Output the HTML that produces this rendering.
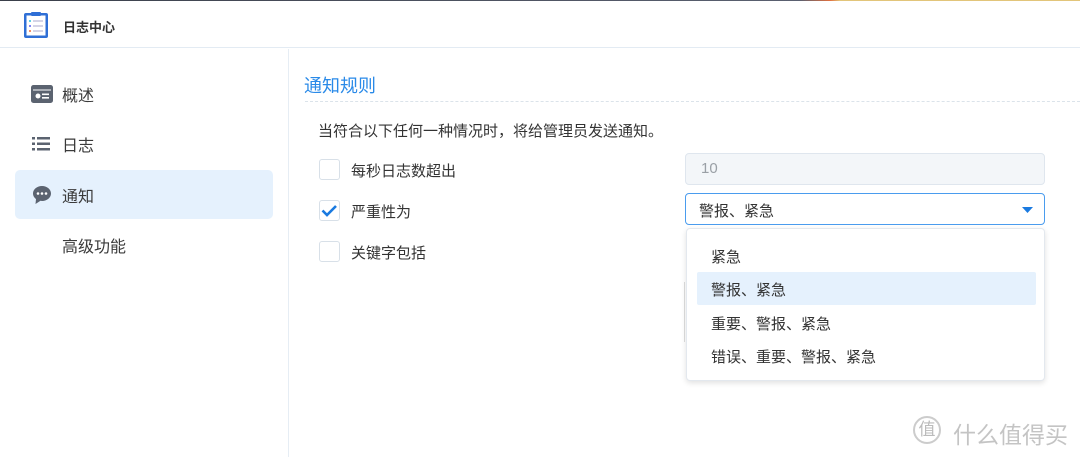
<!DOCTYPE html>
<html><head><meta charset="utf-8"><style>
*{margin:0;padding:0;box-sizing:border-box}
body{width:1080px;height:457px;overflow:hidden;background:#fff;font-family:"Liberation Sans","Noto Sans CJK SC",sans-serif;color:#333;position:relative}
.topline{position:absolute;left:0;top:0;width:1080px;height:1px;background:linear-gradient(90deg,#3a3f4a 0,#5a6070 800px,#e07040 830px,#e2c57a 840px,#e2c57a 100%)}
.hdr{position:absolute;left:0;top:1px;width:1080px;height:47px;border-bottom:1px solid #e3ebf3}
.hdr .t{position:absolute;left:63px;top:16px;font-size:13px;font-weight:bold;color:#333}
.side{position:absolute;left:0;top:49px;width:289px;height:408px;border-right:1px solid #e6edf4}
.it{position:absolute;left:62px;font-size:16px;color:#3a3a3a}
.sel{position:absolute;left:15px;top:121px;width:258px;height:49px;background:#e5f1fd;border-radius:5px}
.x{position:absolute}
.cb{position:absolute;left:319px;width:21px;height:21px;border:1px solid #d8e0e8;border-radius:3px;background:#fff}
.lb{position:absolute;left:351px;font-size:15px;color:#333}
.dd{position:absolute;left:686px;top:228px;width:359px;height:153px;background:#fff;border:1px solid #e3e8ee;border-radius:4px;box-shadow:0 2px 6px rgba(0,0,0,.12)}
.op{position:absolute;left:24px;font-size:15px;color:#333}
</style></head><body>
<div class="topline"></div>
<div class="hdr">
<svg class="x" style="left:23px;top:10px" width="26" height="28" viewBox="0 0 26 28"><rect x="1" y="2" width="24" height="25" rx="2" fill="#2f6fd6"/><rect x="3.5" y="4.5" width="19" height="20" fill="#fff"/><rect x="8" y="1" width="10" height="4" rx="1" fill="#2f6fd6"/><circle cx="7" cy="10" r="1" fill="#2bc4e0"/><circle cx="7" cy="15" r="1" fill="#5b5ff0"/><circle cx="7" cy="20" r="1" fill="#f06a3a"/><rect x="10" y="9.5" width="10" height="1" fill="#aac"/><rect x="10" y="14.5" width="10" height="1" fill="#aac"/><rect x="10" y="19.5" width="10" height="1" fill="#aac"/></svg>
<div class="t">日志中心</div>
</div>
<div class="side">
<div class="sel"></div>
<svg class="x" style="left:31px;top:36px" width="22" height="18" viewBox="0 0 22 18"><rect x="0" y="0" width="22" height="18" rx="2.5" fill="#5b6370"/><circle cx="7" cy="11" r="2.5" fill="#fff"/><rect x="11" y="8.5" width="7" height="1.6" fill="#fff"/><rect x="11" y="12" width="7" height="1.6" fill="#fff"/><rect x="2" y="4.5" width="18" height="1" fill="#fff"/></svg>
<div class="it" style="top:33px">概述</div>
<svg class="x" style="left:32px;top:88px" width="18" height="14" viewBox="0 0 18 14"><g fill="#5b6370"><rect x="0" y="0" width="3" height="2.5"/><rect x="5" y="0" width="13" height="2.5"/><rect x="0" y="5.5" width="3" height="2.5"/><rect x="5" y="5.5" width="13" height="2.5"/><rect x="0" y="11" width="3" height="2.5"/><rect x="5" y="11" width="13" height="2.5"/></g></svg>
<div class="it" style="top:83px">日志</div>
<svg class="x" style="left:32px;top:136px" width="20" height="20" viewBox="0 0 20 20"><path d="M10 1C4.8 1 1 4.5 1 8.5c0 2.3 1.2 4.2 3 5.5L3.5 19l5-3.2c.5.1 1 .2 1.5.2 5.2 0 9-3.5 9-7.5S15.2 1 10 1z" fill="#5b6370"/><circle cx="6" cy="8.5" r="1.3" fill="#fff"/><circle cx="10" cy="8.5" r="1.3" fill="#fff"/><circle cx="14" cy="8.5" r="1.3" fill="#fff"/></svg>
<div class="it" style="top:134px">通知</div>
<div class="it" style="top:184px">高级功能</div>
</div>
<div class="x" style="left:304px;top:72px;font-size:18px;color:#2a8ae8">通知规则</div>
<div class="x" style="left:305px;top:101px;width:775px;border-top:1px dashed #dbe3ea"></div>
<div class="x" style="left:318px;top:120px;font-size:15px;color:#333">当符合以下任何一种情况时，将给管理员发送通知。</div>
<div class="cb" style="top:159px"></div><div class="lb" style="top:160px">每秒日志数超出</div>
<div class="cb" style="top:200px"><svg width="19" height="19" viewBox="0 0 19 19"><path d="M2.5 9.5l4.5 4.5 9-9" stroke="#1a7ae0" stroke-width="2.6" fill="none"/></svg></div><div class="lb" style="top:201px">严重性为</div>
<div class="cb" style="top:241px"></div><div class="lb" style="top:242px">关键字包括</div>
<div class="x" style="left:685px;top:153px;width:360px;height:32px;background:#f3f6f9;border:1px solid #dfe6ee;border-radius:4px;font-size:15px;color:#9aa0a6;padding:6px 0 0 15px">10</div>
<div class="x" style="left:685px;top:193px;width:360px;height:32px;border:1px solid #4a9cee;border-radius:4px;font-size:15px;color:#333;padding:6px 0 0 13px">警报、紧急<svg class="x" style="left:336px;top:13px" width="11" height="6"><path d="M0 0h11L5.5 6z" fill="#1a7ae0"/></svg></div>
<div class="x" style="left:684px;top:282px;width:1px;height:60px;background:#ddd"></div>
<div class="dd">
<div class="op" style="top:17px">紧急</div>
<div class="x" style="left:10px;top:43px;width:339px;height:33px;background:#e5f1fd;border-radius:2px"></div>
<div class="op" style="top:50px">警报、紧急</div>
<div class="op" style="top:84px">重要、警报、紧急</div>
<div class="op" style="top:117px">错误、重要、警报、紧急</div>
</div>
<div class="x" style="left:913px;top:416px;width:28px;height:28px;border:2px solid #ccc;border-radius:50%;font-size:17px;color:#bbb;text-align:center;line-height:24px">值</div>
<div class="x" style="left:953px;top:416px;font-size:23px;color:#c4c4c4;letter-spacing:0px">什么值得买</div>
</body></html>
